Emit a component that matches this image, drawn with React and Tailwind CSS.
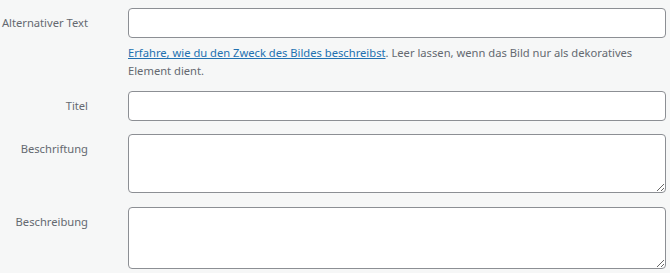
const labelCls =
  "w-[88px] shrink-0 whitespace-nowrap text-right text-[11.2px] leading-[18px] text-[#646970]";
const fieldCls =
  "block w-[538px] rounded-[4px] border border-[#8c8f94] bg-white px-2 text-[13px] text-[#2c3338] outline-none";

const App = () => {
  return (
    <div
      className="h-[273px] w-[670px] overflow-hidden bg-[#f6f7f7] pt-[8px]"
      style={{ fontFamily: '"Noto Sans", "Open Sans", sans-serif' }}
    >
      {/* Alternativer Text */}
      <div className="flex gap-[40px]">
        <label className={`${labelCls} pt-[6px]`}>Alternativer Text</label>
        <div>
          <input type="text" className={`${fieldCls} h-[30px]`} />
          <p className="mt-[6px] w-[538px] text-[11.2px] leading-[18px] text-[#646970]">
            <a href="#" className="text-[#2271b1] underline">
              Erfahre, wie du den Zweck des Bildes beschreibst
            </a>
            . Leer lassen, wenn das Bild nur als dekoratives
            <br />
            Element dient.
          </p>
        </div>
      </div>

      {/* Titel */}
      <div className="mt-[11px] flex gap-[40px]">
        <label className={`${labelCls} pt-[6px]`}>Titel</label>
        <input type="text" className={`${fieldCls} h-[30px]`} />
      </div>

      {/* Beschriftung */}
      <div className="mt-[13px] flex gap-[40px]">
        <label className={`${labelCls} pt-[6px]`}>Beschriftung</label>
        <textarea className={`${fieldCls} h-[59px] resize-y py-1`} />
      </div>

      {/* Beschreibung */}
      <div className="mt-[14px] flex gap-[40px]">
        <label className={`${labelCls} pt-[6px]`}>Beschreibung</label>
        <textarea className={`${fieldCls} h-[62px] resize-y py-1`} />
      </div>
    </div>
  );
};

export default App;
